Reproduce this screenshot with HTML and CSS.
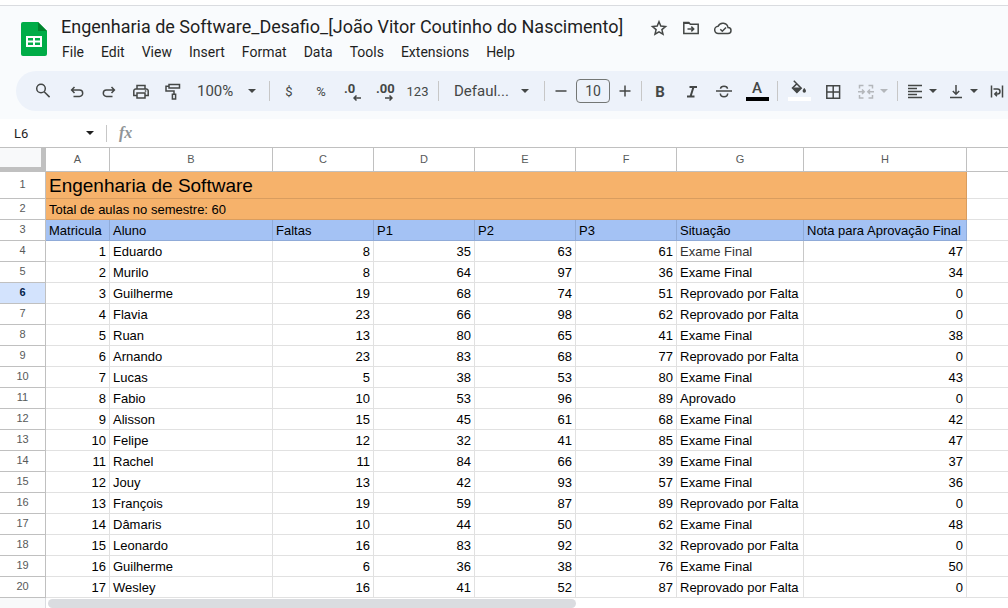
FILE: index.html
```html
<!DOCTYPE html>
<html lang="pt-BR">
<head>
<meta charset="utf-8">
<title>Engenharia de Software_Desafio</title>
<link rel="stylesheet" href="styles.css">
</head>
<body>
<div class="app">
  <header class="top">
    <svg class="logo" viewBox="0 0 26 34" aria-hidden="true"><path d="M2 0h15l9 9v23a2 2 0 0 1-2 2H2a2 2 0 0 1-2-2V2a2 2 0 0 1 2-2z" fill="#00ac47"/><path d="M17 0l9 9h-9z" fill="#00832d"/><path d="M5 14h16v11H5zM7 16v2.500h5V16zM14 16v2.500h5V16zM7 20.500V23h5v-2.500zM14 20.500V23h5v-2.500z" fill="#fff" fill-rule="evenodd"/></svg>
    <div class="head">
      <div class="title-row">
        <h1 class="doc-title">Engenharia de Software_Desafio_[João Vitor Coutinho do Nascimento]</h1>
        <button class="mini" aria-label="Star"><svg class="icon" viewBox="0 0 18 18"><path class="line" d="M9 2.800l1.800 4.300 4.700.4-3.600 3.100 1.100 4.600L9 12.800l-4 2.400 1.100-4.600-3.600-3.100 4.700-.4z"/></svg></button>
        <button class="mini" aria-label="Move"><svg class="icon" viewBox="0 0 18 18"><path class="line" d="M1.800 3.500h5l1.500 1.700h7.900v9.300H1.800z"/><path class="line" d="M1.800 4.200h5.500M5.500 10h6M9.300 7.600l2.400 2.400-2.400 2.400"/></svg></button>
        <button class="mini" aria-label="Saved to cloud"><svg class="icon" viewBox="0 0 18 18"><path class="line" d="M4.500 14.500a3.600 3.600 0 0 1-.4-7.200A5.200 5.200 0 0 1 14 8.500a3 3 0 0 1 0 6z"/><path class="line" d="M6.300 10.200l2 2 3.700-3.800"/></svg></button>
      </div>
      <nav class="menu">
        <button>File</button><button>Edit</button><button>View</button><button>Insert</button><button>Format</button><button>Data</button><button>Tools</button><button>Extensions</button><button>Help</button>
      </nav>
    </div>
  </header>

  <div class="toolbar" role="toolbar" aria-label="Main">
    <button class="tool first" aria-label="Search"><svg class="icon" viewBox="0 0 18 18"><circle class="line" cx="7" cy="6.500" r="4.300"/><path class="line" d="M10.200 9.700l5.400 5.400"/></svg></button>
    <button class="tool" aria-label="Undo"><svg class="icon" viewBox="0 0 18 18"><path class="line" d="M6.500 5L3.600 8l2.900 3M4 8h7.500a3.200 3.200 0 0 1 0 6.400H5.500"/></svg></button>
    <button class="tool" aria-label="Redo"><svg class="icon" viewBox="0 0 18 18"><path class="line" d="M11.500 5l2.900 3-2.900 3M14 8H6.500a3.200 3.200 0 0 0 0 6.400h6"/></svg></button>
    <button class="tool" aria-label="Print"><svg class="icon" viewBox="0 0 18 18"><path class="line" d="M5 6.200V3.500h8v2.700M5 13.500H1.800V8.900a2 2 0 0 1 2-2h10.400a2 2 0 0 1 2 2v4.600H13M5 11h8v5H5z"/><path d="M12.800 8.200h1.500v1.500h-1.500z" fill="currentColor"/></svg></button>
    <button class="tool" aria-label="Paint format"><svg class="icon" viewBox="0 0 18 18"><path class="line" d="M5 2.500h10.500v3.400H5zM5 4.200H2v4.700h8v3.800M8.400 12.200h3.200V17H8.400z"/></svg></button>
    <span class="pick zoom"><select aria-label="Zoom"><option>100%</option></select><svg class="caret" viewBox="0 0 8 4"><path d="M0 0h8L4 4z"/></svg></span>
    <span class="rule wide"></span>
    <button class="tool text" aria-label="Currency">$</button>
    <button class="tool text" aria-label="Percent">%</button>
    <button class="tool dec" aria-label="Decrease decimals"><span>.0</span><svg class="arrow" viewBox="0 0 8 6"><path class="line" d="M8 3H1M3.500.5L1 3l2.500 2.500"/></svg></button>
    <button class="tool dec" aria-label="Increase decimals"><span>.00</span><svg class="arrow" viewBox="0 0 8 6"><path class="line" d="M0 3h7M4.500.5L7 3 4.500 5.500"/></svg></button>
    <button class="tool text num" aria-label="More formats">123</button>
    <span class="rule"></span>
    <span class="pick font"><select aria-label="Font"><option>Defaul...</option></select><svg class="caret" viewBox="0 0 8 4"><path d="M0 0h8L4 4z"/></svg></span>
    <span class="rule wide"></span>
    <button class="step" aria-label="Smaller"><svg class="icon" viewBox="0 0 18 18"><path class="line" d="M3.500 9h11"/></svg></button>
    <input class="size" aria-label="Font size" value="10">
    <button class="step" aria-label="Larger"><svg class="icon" viewBox="0 0 18 18"><path class="line" d="M3.500 9h11M9 3.500v11"/></svg></button>
    <span class="rule after"></span>
    <button class="tool" aria-label="Bold"><b class="bold">B</b></button>
    <button class="tool" aria-label="Italic"><svg class="icon" viewBox="0 0 18 18"><path class="heavy" d="M6.500 5H14M4 14.500h7.500M10.500 5l-3 9.500"/></svg></button>
    <button class="tool" aria-label="Strikethrough"><svg class="icon" viewBox="0 0 18 18"><path class="line" d="M1 9h16M5.500 6.700c.3-3.400 6.700-3.400 7 0M5.300 11.500c.2 4.300 7.200 4.300 7.400 0"/></svg></button>
    <button class="tool color" aria-label="Text colour"><span>A</span><i class="swatch black"></i></button>
    <span class="rule"></span>
    <button class="tool color" aria-label="Fill colour"><svg class="bucket" viewBox="0 0 16 14"><path class="line" d="M2.800.8l7.400 7.400-4.300 4.200L1.500 8l4.800-4.600"/><path d="M1.500 7.500h9L6 12.800zM13.300 8s1.700 1.900 1.700 3a1.700 1.700 0 0 1-3.400 0c0-1.100 1.700-3 1.700-3z" fill="currentColor"/></svg><i class="swatch white"></i></button>
    <button class="tool borders" aria-label="Borders"><svg class="icon" viewBox="0 0 18 18"><path class="line" d="M2.800 3.800h12.800v12.500H2.800zM9.200 3.800v12.500M2.800 10h12.800"/></svg></button>
    <div class="duo off"><button class="tool slim" aria-label="Merge"><svg class="icon" viewBox="0 0 18 18"><path class="line" d="M6.500 3.500h-4v3M6.500 16h-4v-3M11.500 3.500h4v3M11.500 16h4v-3M1 9.700h6M5 7.500l2.200 2.200L5 11.900M17 9.700h-6M13 7.500l-2.200 2.200 2.200 2.200"/></svg></button><button class="drop" aria-label="Merge options"><svg class="caret" viewBox="0 0 8 4"><path d="M0 0h8L4 4z"/></svg></button></div>
    <span class="rule"></span>
    <div class="duo"><button class="tool slim" aria-label="Horizontal align"><svg class="icon" viewBox="0 0 18 18"><path class="line" d="M2 3.500h14M2 6.500h9M2 9.500h14M2 12.500h9M2 15.500h14"/></svg></button><button class="drop" aria-label="Horizontal align options"><svg class="caret" viewBox="0 0 8 4"><path d="M0 0h8L4 4z"/></svg></button></div>
    <div class="duo"><button class="tool slim" aria-label="Vertical align"><svg class="icon" viewBox="0 0 18 18"><path class="line" d="M3 15.500h12M9 3v9M5.800 9L9 12.200 12.200 9"/></svg></button><button class="drop" aria-label="Vertical align options"><svg class="caret" viewBox="0 0 8 4"><path d="M0 0h8L4 4z"/></svg></button></div>
    <button class="tool slim" aria-label="Text wrapping"><svg class="icon" viewBox="0 0 18 18"><path class="line" d="M3.500 3.500v12M14.500 3.500v12M5.500 7h4a2.500 2.500 0 0 1 0 5H7M9 9.800L6.800 12 9 14.200"/></svg></button>
  </div>

  <div class="formula">
    <button class="name-box"><span>L6</span><svg class="caret" viewBox="0 0 8 4"><path d="M0 0h8L4 4z"/></svg></button>
    <span class="rule tall"></span>
    <label class="fx" for="formula">fx</label>
    <input class="formula-input" id="formula">
  </div>

  <table class="sheet">
    <colgroup><col class="c-row"><col class="c-a"><col class="c-b"><col class="c-n"><col class="c-n"><col class="c-n"><col class="c-n"><col class="c-g"><col class="c-b"><col></colgroup>
    <thead><tr><th class="corner"></th><th>A</th><th>B</th><th>C</th><th>D</th><th>E</th><th>F</th><th>G</th><th>H</th><th></th></tr></thead>
    <tbody>
      <tr class="banner big"><th>1</th><td colspan="8">Engenharia de Software</td><td></td></tr>
      <tr class="banner"><th>2</th><td colspan="8">Total de aulas no semestre: 60</td><td></td></tr>
      <tr class="fields"><th>3</th><td>Matricula</td><td>Aluno</td><td>Faltas</td><td>P1</td><td>P2</td><td>P3</td><td>Situação</td><td>Nota para Aprovação Final</td><td></td></tr>
      <tr><th>4</th><td>1</td><td>Eduardo</td><td>8</td><td>35</td><td>63</td><td>61</td><td class="soft">Exame Final</td><td>47</td><td></td></tr>
      <tr><th>5</th><td>2</td><td>Murilo</td><td>8</td><td>64</td><td>97</td><td>36</td><td>Exame Final</td><td>34</td><td></td></tr>
      <tr><th class="active">6</th><td>3</td><td>Guilherme</td><td>19</td><td>68</td><td>74</td><td>51</td><td>Reprovado por Falta</td><td>0</td><td></td></tr>
      <tr><th>7</th><td>4</td><td>Flavia</td><td>23</td><td>66</td><td>98</td><td>62</td><td>Reprovado por Falta</td><td>0</td><td></td></tr>
      <tr><th>8</th><td>5</td><td>Ruan</td><td>13</td><td>80</td><td>65</td><td>41</td><td>Exame Final</td><td>38</td><td></td></tr>
      <tr><th>9</th><td>6</td><td>Arnando</td><td>23</td><td>83</td><td>68</td><td>77</td><td>Reprovado por Falta</td><td>0</td><td></td></tr>
      <tr><th>10</th><td>7</td><td>Lucas</td><td>5</td><td>38</td><td>53</td><td>80</td><td>Exame Final</td><td>43</td><td></td></tr>
      <tr><th>11</th><td>8</td><td>Fabio</td><td>10</td><td>53</td><td>96</td><td>89</td><td>Aprovado</td><td>0</td><td></td></tr>
      <tr><th>12</th><td>9</td><td>Alisson</td><td>15</td><td>45</td><td>61</td><td>68</td><td>Exame Final</td><td>42</td><td></td></tr>
      <tr><th>13</th><td>10</td><td>Felipe</td><td>12</td><td>32</td><td>41</td><td>85</td><td>Exame Final</td><td>47</td><td></td></tr>
      <tr><th>14</th><td>11</td><td>Rachel</td><td>11</td><td>84</td><td>66</td><td>39</td><td>Exame Final</td><td>37</td><td></td></tr>
      <tr><th>15</th><td>12</td><td>Jouy</td><td>13</td><td>42</td><td>93</td><td>57</td><td>Exame Final</td><td>36</td><td></td></tr>
      <tr><th>16</th><td>13</td><td>François</td><td>19</td><td>59</td><td>87</td><td>89</td><td>Reprovado por Falta</td><td>0</td><td></td></tr>
      <tr><th>17</th><td>14</td><td>Dâmaris</td><td>10</td><td>44</td><td>50</td><td>62</td><td>Exame Final</td><td>48</td><td></td></tr>
      <tr><th>18</th><td>15</td><td>Leonardo</td><td>16</td><td>83</td><td>92</td><td>32</td><td>Reprovado por Falta</td><td>0</td><td></td></tr>
      <tr><th>19</th><td>16</td><td>Guilherme</td><td>6</td><td>36</td><td>38</td><td>76</td><td>Exame Final</td><td>50</td><td></td></tr>
      <tr><th>20</th><td>17</td><td>Wesley</td><td>16</td><td>41</td><td>52</td><td>87</td><td>Reprovado por Falta</td><td>0</td><td></td></tr>
    </tbody>
  </table>
  <div class="scroll"><div class="scroll-corner"></div><div class="track"><div class="thumb"></div></div></div>
</div>
</body>
</html>
```

FILE: styles.css
```css
* { box-sizing: border-box; }
body { margin: 0; background: #fff; color: #1f1f1f; font-family: Roboto, "Liberation Sans", sans-serif; overflow: hidden; }
button, input, select { font: inherit; color: inherit; background: none; border: 0; padding: 0; margin: 0; }
.app { background: #f9fbfd; border-top: 5px solid #fff; }

.top { display: flex; gap: 14px; height: 66px; padding: 17px 0 0 21px; border-top: 1px solid #dadce0; }
.logo { width: 26px; height: 34px; flex: none; margin-top: -1px; }
.head { margin-top: -8px; }
.title-row { display: flex; align-items: center; height: 24px; white-space: nowrap; }
.doc-title { margin: 0 20px 0 0; font-size: 18px; font-weight: 400; line-height: 24px; }
.mini { display: flex; align-items: center; justify-content: center; width: 32px; height: 24px; padding-top: 2px; color: #444746; }
.icon { width: 18px; height: 18px; flex: none; display: block; }
.line { fill: none; stroke: currentColor; stroke-width: 1.5; }
.heavy { fill: none; stroke: currentColor; stroke-width: 2; }
.menu { display: flex; gap: 3px; margin: 2px 0 0 -6px; }
.menu button { padding: 0 7px; font-size: 14px; line-height: 22px; }

.toolbar { display: flex; align-items: center; height: 40px; margin-left: 16px; padding-left: 11px; background: #edf2fa; border-radius: 20px 0 0 20px; color: #444746; overflow: hidden; }
.toolbar > * { flex: none; }
.tool { display: flex; align-items: center; justify-content: center; width: 32px; height: 30px; }
.first { margin-right: 2px; }
.text { font-size: 13px; }
.num { width: 33px; }
.pick { position: relative; display: flex; }
.pick select { width: 100%; padding-left: 8px; appearance: none; font-size: 15px; line-height: 20px; }
.pick .caret { position: absolute; right: 5px; top: 8px; pointer-events: none; }
.zoom { width: 72px; }
.font { width: 90px; margin: 0 0 0 3px; }
.font .caret { right: 7px; }
.caret { width: 8px; height: 4px; fill: currentColor; flex: none; }
.rule { width: 1px; height: 20px; margin: 0 4px; background: #c7c7c7; }
.wide { margin: 0 3px 0 8px; }
.after { margin: 0 2px 0 7px; }
.tall { height: 17px; margin: 0 12px 0 10px; }
.dec { flex-direction: column; align-items: flex-start; padding-left: 7px; font-size: 13px; font-weight: 700; line-height: 14px; }
.arrow { width: 8px; height: 6px; margin: -1px 0 0 9px; }
.step { display: flex; justify-content: center; width: 18px; margin-left: 4px; }
.size { width: 34px; height: 24px; margin: 0 2px 0 6px; border: 1px solid #747775; border-radius: 4px; font-size: 14px; text-align: center; }
.bold { font-size: 15px; line-height: 18px; padding-top: 1px; }
.color { flex-direction: column; justify-content: flex-end; margin-left: 1px; padding-bottom: 5px; font-size: 15px; font-weight: 500; line-height: 15px; }
.swatch { width: 23px; height: 4px; margin-top: 1px; }
.black { background: #000; }
.white { background: #fff; }
.bucket { width: 16px; height: 14px; margin-bottom: 2px; }
.borders { margin-left: 2px; }
.duo { display: flex; margin-right: 5px; }
.off { color: #b4b7bb; margin: 0 4px; }
.slim { width: 26px; }
.drop { display: flex; align-items: center; justify-content: center; width: 10px; }

.formula { display: flex; align-items: center; height: 37px; border-top: 8px solid #f9fbfd; border-bottom: 1px solid #c0c0c0; background: #fff; color: #444746; }
.name-box { display: flex; align-items: center; justify-content: space-between; width: 96px; padding: 0 2px 0 14px; font-size: 13px; color: #1f1f1f; }
.fx { font: italic bold 16px "Liberation Serif", serif; color: #909497; }
.formula-input { flex: 1; margin-left: 8px; outline: 0; }

.sheet { width: 100%; table-layout: fixed; border-collapse: separate; border-spacing: 0; background: #fff; font: 13px/18px "Liberation Sans", Arial, sans-serif; color: #000; }
.c-row { width: 46px; }
.c-a { width: 64px; }
.c-b { width: 163px; }
.c-n { width: 101px; }
.c-g { width: 127px; }
.sheet th { padding: 0; font-size: 11px; font-weight: 400; color: #575a5a; border: solid #c0c0c0; border-width: 0 1px 1px 0; }
.sheet thead th { height: 24px; line-height: 23px; }
.sheet thead th:last-child { border-right: 0; }
.sheet .corner { background: #f8f9fa; border: solid #c0c0c0; border-width: 0 5px 5px 0; }
.sheet tbody th { height: 21px; line-height: 18px; padding-bottom: 2px; }
.sheet .active { background: #d3e3fd; color: #041e49; font-weight: 700; }
.sheet td { padding: 2px 3px 0; text-align: right; white-space: nowrap; border: solid #e1e1e1; border-width: 0 1px 1px 0; }
.sheet td:last-child { border-right: 0; }
.sheet td:nth-child(3), .sheet td:nth-child(8) { text-align: left; }
.sheet .fields td { text-align: left; }
.sheet .fields td:not(:last-child) { background: #a4c2f4; border-color: #90abd8; }
.sheet .banner td { text-align: left; }
.sheet .banner td:not(:last-child) { background: #f6b26b; border-color: #d99d5f; }
.sheet .big td { height: 27px; font-size: 19px; line-height: 24px; }
.sheet .soft { color: #333; border-color: #c8c8c8; }

.scroll { display: flex; height: 11px; background: #fff; }
.scroll-corner { width: 46px; background: #f8f9fa; border-right: 1px solid #dadce0; }
.track { flex: 1; padding: 1px 0 0 2px; }
.thumb { width: 55%; height: 9px; border-radius: 5px; background: #dadce0; }
```
